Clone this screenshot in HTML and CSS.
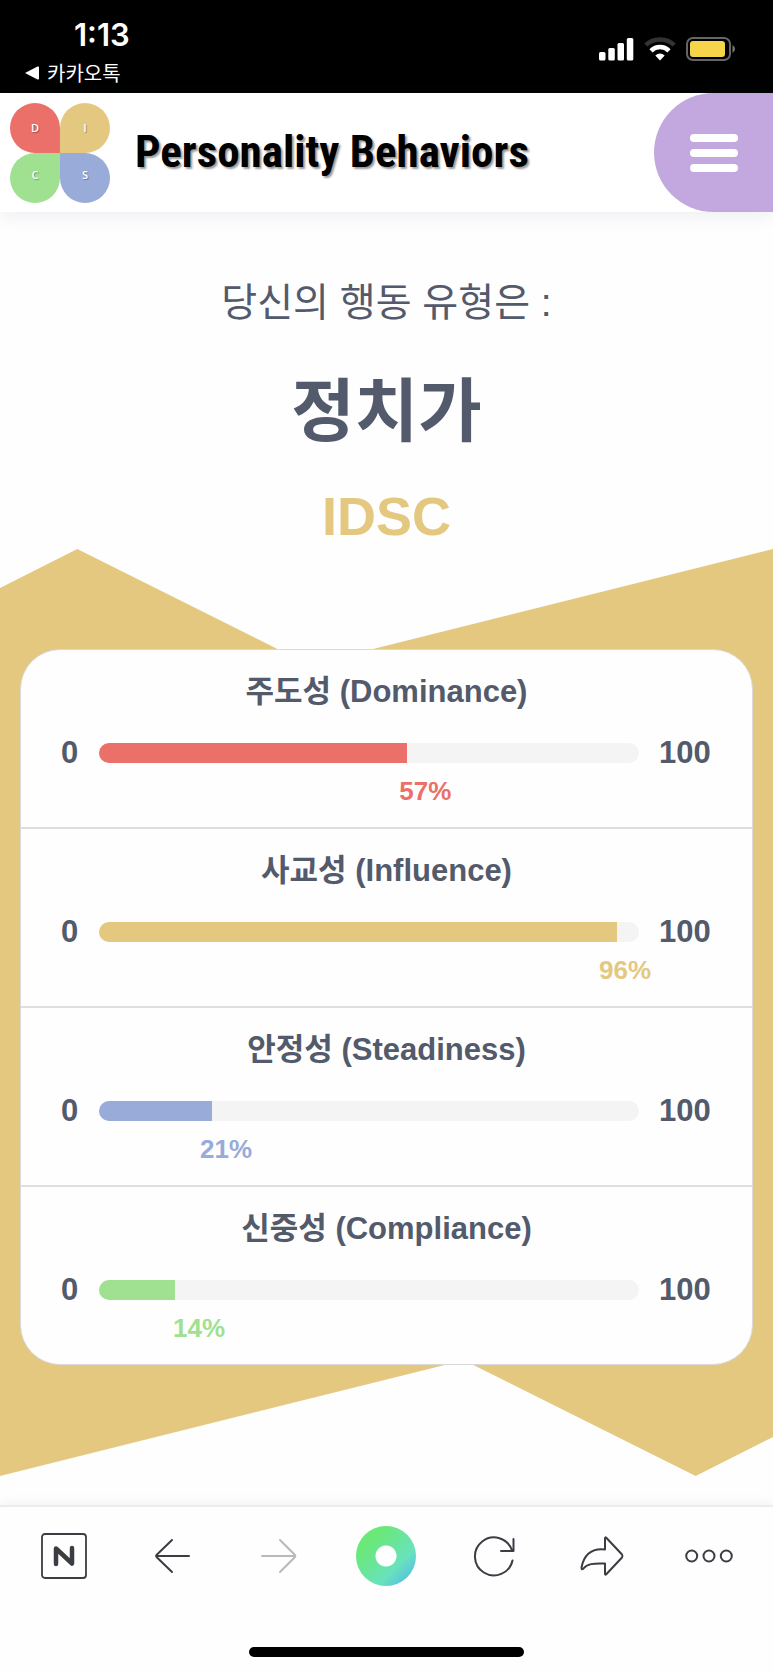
FILE: index.html
```html
<!DOCTYPE html>
<html lang="ko">
<head>
<meta charset="utf-8">
<meta name="viewport" content="width=device-width, initial-scale=1">
<title>Personality Behaviors</title>
<link rel="stylesheet" href="styles.css">
</head>
<body>
<div class="status">
  <div class="status-left">
    <span class="time">1:13</span>
    <a class="back-app" href="#"><svg width="14" height="14" viewBox="0 0 14 14" aria-hidden="true"><path d="M0 7 12.500.6Q14 0 14 1.500V12.500Q14 14 12.500 13.400Z" fill="#fff"/></svg>카카오톡</a>
  </div>
  <div class="status-icons">
    <svg width="35" height="24" viewBox="0 0 35 24" fill="#fff" aria-label="신호"><rect x="0" y="15" width="6.500" height="8.500" rx="1.500"/><rect x="9.300" y="11" width="6.500" height="12.500" rx="1.500"/><rect x="18.500" y="6" width="6.500" height="17.500" rx="1.500"/><rect x="27.800" y="1" width="6.500" height="22.500" rx="1.500"/></svg>
    <svg width="32" height="24" viewBox="0 0 32 24" fill="none" stroke-width="4.500" aria-label="와이파이"><path d="M1.800 8C9.500.5 22.500.5 30.200 8" stroke="#333"/><path d="M7 13.800C12 8.800 20 8.800 25 13.800" stroke="#fff"/><path d="M11.300 18.600Q16 14.600 20.700 18.600L16 23.500Z" fill="#fff"/></svg>
    <svg width="50" height="24" viewBox="0 0 50 24" aria-label="배터리"><rect x="1" y="1" width="43" height="22" rx="6" fill="none" stroke="#666" stroke-width="2"/><rect x="4" y="4" width="35" height="16" rx="3" fill="#f7d54a"/><path d="M46.500 8Q49 9.500 49 12T46.500 16Z" fill="#777"/></svg>
  </div>
</div>

<header class="header">
  <a class="logo" href="#" aria-label="DISC">
    <span class="petal petal-d">D</span><span class="petal petal-i">I</span>
    <span class="petal petal-c">C</span><span class="petal petal-s">S</span>
  </a>
  <span class="brand">Personality Behaviors</span>
  <button class="menu" aria-label="메뉴"><span></span><span></span><span></span></button>
</header>

<main class="main">
  <div class="intro">
    <p class="lead">당신의 행동 유형은 :</p>
    <h1 class="type">정치가</h1>
    <p class="code">IDSC</p>
  </div>

  <section class="result">
    <div class="card">
      <article class="trait dominance">
        <h2>주도성 (Dominance)</h2>
        <div class="scale"><span>0</span><div class="track"><div class="fill" style="width:57%"></div></div><span>100</span>
        <div class="value" style="padding-left:55.6%">57%</div></div>
      </article>
      <article class="trait influence">
        <h2>사교성 (Influence)</h2>
        <div class="scale"><span>0</span><div class="track"><div class="fill" style="width:96%"></div></div><span>100</span>
        <div class="value" style="padding-left:92.6%">96%</div></div>
      </article>
      <article class="trait steadiness">
        <h2>안정성 (Steadiness)</h2>
        <div class="scale"><span>0</span><div class="track"><div class="fill" style="width:21%"></div></div><span>100</span>
        <div class="value" style="padding-left:18.7%">21%</div></div>
      </article>
      <article class="trait compliance">
        <h2>신중성 (Compliance)</h2>
        <div class="scale"><span>0</span><div class="track"><div class="fill" style="width:14%"></div></div><span>100</span>
        <div class="value" style="padding-left:13.7%">14%</div></div>
      </article>
    </div>
  </section>
</main>

<footer class="toolbar">
  <nav class="tools">
    <button aria-label="네이버"><svg width="48" height="48" viewBox="0 0 48 48"><rect x="2" y="2" width="44" height="44" rx="3" stroke-width="1.800"/><path d="M16 32V16.500L32 31.500V16" stroke-width="4.500"/></svg></button>
    <button aria-label="뒤로"><svg width="48" height="48" viewBox="0 0 48 48"><path d="M42 24H9M25 8 10 22.500Q8.500 24 10 25.500L25 40"/></svg></button>
    <button aria-label="앞으로" disabled><svg width="48" height="48" viewBox="0 0 48 48"><path d="M7 24H40M25 8 39.500 22.500Q41 24 39.500 25.500L25 40"/></svg></button>
    <button aria-label="그린닷"><span class="dot"></span></button>
    <button aria-label="새로고침"><svg width="48" height="48" viewBox="0 0 48 48"><path d="M42.500 28.500A19 19 0 1 1 42 18.500M43.500 7V19H31"/></svg></button>
    <button aria-label="공유"><svg width="48" height="48" viewBox="0 0 48 48"><path d="M27 6.500Q27 4.500 28.500 6L44 22.500Q45 24 44 25.500L28.500 42Q27 43.500 27 41.500V31.500C15 31 9 32 5.500 36.500Q3.500 38.500 3.500 35.500C6 23 13 16 27 17.500Z"/></svg></button>
    <button aria-label="더보기"><svg width="48" height="48" viewBox="0 0 48 48"><circle cx="6.700" cy="24" r="5.500"/><circle cx="24" cy="24" r="5.500"/><circle cx="41.300" cy="24" r="5.500"/></svg></button>
  </nav>
  <div class="home"></div>
</footer>
</body>
</html>
```

FILE: styles.css
```css
:root {
  --ink: #525a6b;
  --red: #eb7069;
  --gold: #e5c87f;
  --blue: #98abd9;
  --green: #9fe191;
}
* { box-sizing: border-box; }
body {
  margin: 0;
  min-height: 100vh;
  display: flex;
  flex-direction: column;
  background: #fefefe;
  color: var(--ink);
  font-family: "Liberation Sans", "Noto Sans CJK KR", sans-serif;
}
h1, h2, p { margin: 0; }
button { border: 0; padding: 0; background: none; cursor: pointer; }
svg { display: block; }

.status {
  display: flex;
  justify-content: space-between;
  height: 93px;
  padding: 0 37px 0 25px;
  background: #000;
  color: #fff;
}
.status-left { display: flex; flex-direction: column; padding-top: 17px; }
.time {
  padding-left: 49px;
  font: 600 31px/36px Inter, sans-serif;
}
.back-app {
  display: flex;
  align-items: center;
  gap: 8px;
  color: #fff;
  font: 20px/40px "Noto Sans CJK KR", sans-serif;
  text-decoration: none;
}
.status-icons { display: flex; gap: 10px; padding-top: 37px; }

.header {
  display: flex;
  align-items: center;
  height: 119px;
  padding-left: 10px;
  background: #fff;
  box-shadow: 0 4px 16px rgba(90, 100, 130, 0.1);
}
.logo {
  display: grid;
  grid-template-columns: 50px 50px;
  color: #fff;
  text-decoration: none;
}
.petal {
  height: 50px;
  border-radius: 50%;
  text-align: center;
  font: 600 11px/50px "Open Sans", sans-serif;
  text-shadow: 1px 1px 1px rgba(0, 0, 0, 0.3);
}
.petal-d { background: var(--red); border-bottom-right-radius: 0; }
.petal-i { background: var(--gold); border-bottom-left-radius: 0; }
.petal-c { background: var(--green); border-top-right-radius: 0; line-height: 44px; }
.petal-s { background: var(--blue); border-top-left-radius: 0; line-height: 44px; }
.brand {
  flex: 1;
  padding: 0 0 2px 25px;
  color: #000;
  font: 700 45px/56px "Roboto Condensed", "Liberation Sans Narrow", Roboto, sans-serif;
  white-space: nowrap;
  text-shadow: 2px 2px 2px rgba(0, 0, 0, 0.4);
}
.menu {
  display: flex;
  flex-direction: column;
  align-items: center;
  justify-content: center;
  gap: 7px;
  width: 119px;
  height: 119px;
  border-radius: 60px 0 0 60px;
  background: #c2a8de;
}
.menu span { width: 48px; height: 8px; border-radius: 4px; background: #fff; }

.main { flex: 1; }
.intro { padding-top: 61px; text-align: center; }
.lead { font-size: 39px; line-height: 60px; }
.type { font-size: 69px; line-height: 100px; padding-top: 30px; }
.code { font-size: 54px; font-weight: 700; line-height: 60px; padding: 23px 0 3px; color: var(--gold); }

.result { position: relative; padding: 100px 20px 111px; }
.result::before {
  content: "";
  position: absolute;
  inset: 0;
  background: var(--gold);
  clip-path: polygon(0 4.2%, 10% 0, 40% 12.5%, 100% 0, 100% 95.8%, 90% 100%, 60% 87.5%, 0 100%);
}
.card {
  position: relative;
  border: 1px solid #d9d9d9;
  border-radius: 40px;
  background: #fefefe;
}
.trait { padding: 24px 40px; }
.trait + .trait { border-top: 2px solid #dedfdf; }
.trait h2 { font-size: 31px; line-height: 36px; text-align: center; }
.scale {
  display: grid;
  grid-template-columns: 18px 1fr 53px;
  column-gap: 20px;
  row-gap: 8px;
  align-items: center;
  padding-top: 25px;
  font-size: 31px;
  font-weight: 700;
  line-height: 36px;
}
.track { height: 20px; border-radius: 10px; background: #f4f4f4; overflow: hidden; }
.fill { height: 100%; background: currentColor; }
.value { grid-column: 2; font-size: 26px; line-height: 24px; white-space: nowrap; }
.dominance .track, .dominance .value { color: var(--red); }
.influence .track, .influence .value { color: var(--gold); }
.steadiness .track, .steadiness .value { color: var(--blue); }
.compliance .track, .compliance .value { color: var(--green); }

.toolbar {
  padding: 19px 10px 16px;
  border-top: 2px solid #ebecef;
  background: #fefefe;
  box-shadow: 0 -2px 10px rgba(90, 100, 130, 0.08);
}
.tools { display: grid; grid-template-columns: repeat(7, 1fr); }
.tools button { display: flex; align-items: center; justify-content: center; height: 60px; color: #3b3d43; }
.tools button:disabled { color: #b9b9bb; }
.tools svg { fill: none; stroke: currentColor; stroke-width: 2; stroke-linecap: round; stroke-linejoin: round; }
.dot {
  width: 60px;
  height: 60px;
  border-radius: 50%;
  background: radial-gradient(circle, #fff 10px, transparent 11px), linear-gradient(135deg, #6ae878 25%, #69e2bd 68%, #55bfe4 90%);
}
.home { width: 275px; height: 10px; margin: 61px auto 0; border-radius: 5px; background: #000; }
```
